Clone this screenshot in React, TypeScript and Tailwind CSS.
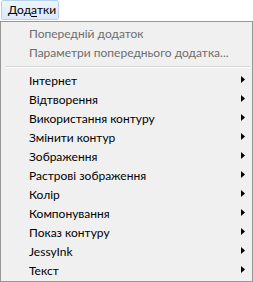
import React from "react";

const disabled = ["Попередній додаток", "Параметри попереднього додатка..."];
const items = [
  "Інтернет",
  "Відтворення",
  "Використання контуру",
  "Змінити контур",
  "Зображення",
  "Растрові зображення",
  "Колір",
  "Компонування",
  "Показ контуру",
  "JessyInk",
  "Текст",
];

function Arrow() {
  return (
    <svg width="4" height="7" viewBox="0 0 4 7" className="block mb-[3px]">
      <path d="M0 0 L4 3.5 L0 7 Z" fill="#000" />
    </svg>
  );
}

export default function App() {
  return (
    <div className="w-[253px] h-[282px] bg-white font-['Lato','Noto_Sans',sans-serif] text-[12px] leading-none">
      <div className="h-[21px] flex items-start">
        <div className="ml-[1px] h-[20px] w-[58px] border border-[#b4d2f5] rounded-[2px] bg-gradient-to-b from-[#eef5fd] to-[#dbe9fa] flex items-center pl-[6px] text-black">
          Дод<span className="underline underline-offset-2">а</span>тки
        </div>
      </div>
      <div className="h-[261px] border border-[#979797] bg-[#f0f0f0] pt-[2px]">
        {disabled.map((t) => (
          <div key={t} className="h-[19px] flex items-center pl-[28px] text-[#6d6d6d]">
            {t}
          </div>
        ))}
        <div className="h-[9px] flex items-center pl-[5px] pr-[2px]">
          <div className="w-full h-[2px] border-t border-[#d7d7d7] border-b border-b-white" />
        </div>
        {items.map((t) => (
          <div key={t} className="h-[19px] flex items-center justify-between pl-[28px] pr-[7px] text-black">
            <span>{t}</span>
            <Arrow />
          </div>
        ))}
      </div>
    </div>
  );
}
